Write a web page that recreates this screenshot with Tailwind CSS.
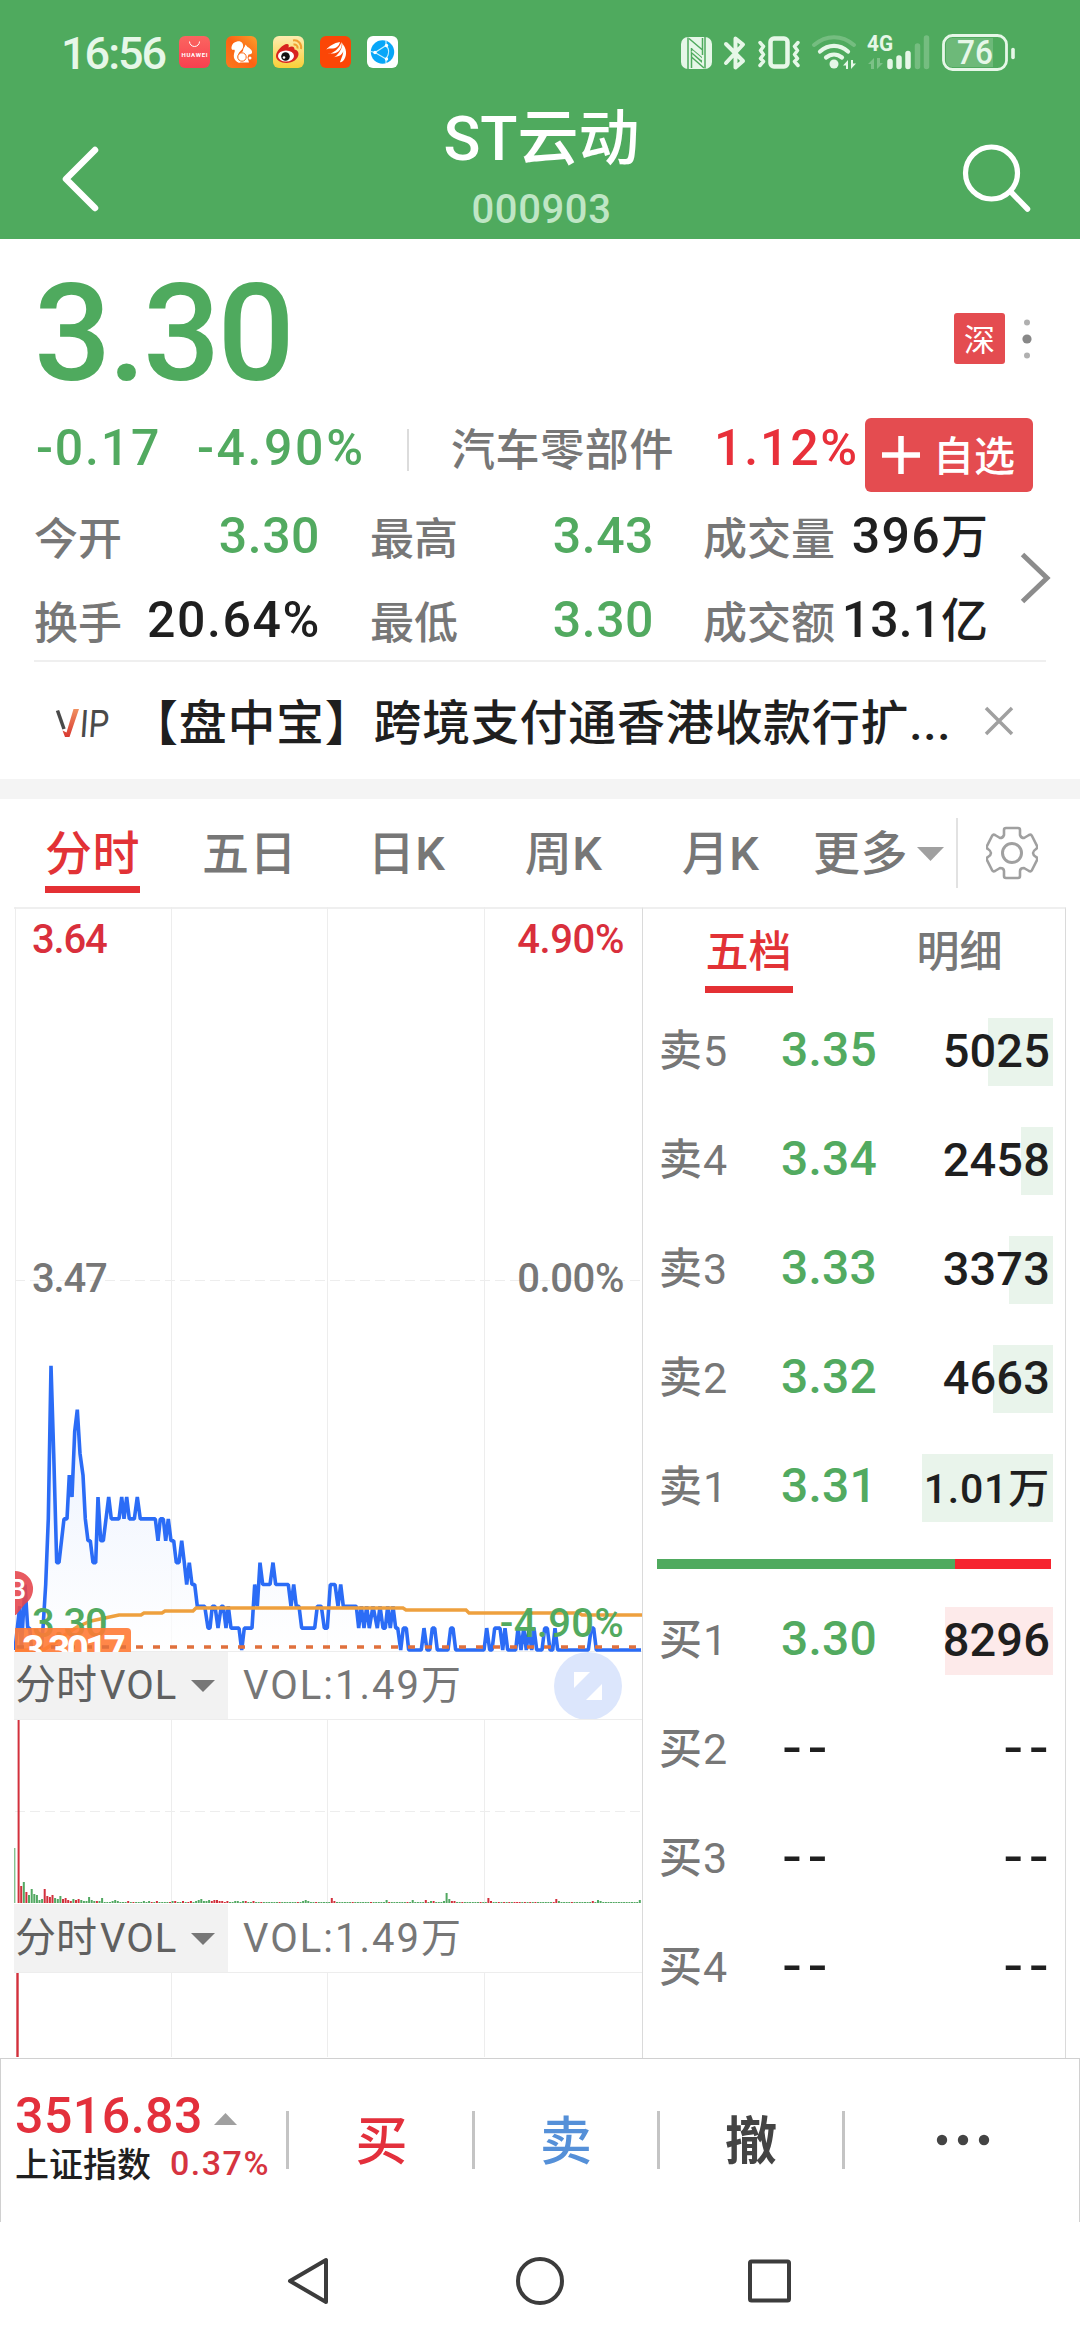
<!DOCTYPE html>
<html lang="zh-CN">
<head>
    <meta charset="UTF-8">
    <meta name="viewport" content="width=device-width, initial-scale=1.0">
    <title>ST云动 000903</title>
    <script src="https://cdn.jsdelivr.net/npm/@tailwindcss/browser@4"></script>
</head>
<body class="w-[1080px] h-[2340px] overflow-hidden bg-white text-[#1f1f1f] font-medium leading-none whitespace-nowrap font-['Roboto','Noto_Sans_CJK_SC',sans-serif]">
    <header class="h-[239px] bg-[#4faa5e] text-white">
        <!-- status bar -->
        <div class="h-[104px] flex items-center justify-between pl-[61px] pr-[65px] text-[#e6f7e8]">
            <div class="flex items-center">
                <span class="w-[118px] text-[45px] tracking-[-2px] pt-[2px]">16:56</span>
                <svg class="w-[220px] h-8" viewBox="0 0 220 32">
                    <defs>
                        <linearGradient id="hw" x1="0" y1="0" x2="0" y2="1"><stop offset="0" stop-color="#fb6560"/><stop offset="1" stop-color="#f8404f"/></linearGradient>
                        <linearGradient id="uc" x1="1" y1="0" x2="0" y2="1"><stop offset="0" stop-color="#fba02c"/><stop offset=".5" stop-color="#fd6212"/><stop offset="1" stop-color="#fb7a20"/></linearGradient>
                        <linearGradient id="wb" x1="0" y1="0" x2="0" y2="1"><stop offset="0" stop-color="#fdecb0"/><stop offset="1" stop-color="#f8cf38"/></linearGradient>
                    </defs>
                    <rect width="31" height="32" rx="6" fill="url(#hw)"/>
                    <path d="M10.500 5.500a5 5 0 0 0 10 0" fill="none" stroke="#fff" stroke-width="1"/>
                    <text x="15.500" y="21" font-size="6" font-weight="700" fill="#fff" text-anchor="middle" textLength="26">HUAWEI</text>
                    <g transform="translate(47)">
                        <rect width="31" height="32" rx="6" fill="url(#uc)"/>
                        <path d="M11 5.500c4-1 7 2 6 6-1 3-4 4-5 7-1 3 0 6 2 8.500-4-1-7-4-6-9 .4-2 1.500-3.500 0-4.500-1 1-3 0-2.500-2.500C6 8 8 6 11 5.500z" fill="#fff"/>
                        <path d="M17 15c0-3 2-4 2.500-6.500l2 2.500c2 1 4 2.500 4.500 4.500.5 2-1 3-3.500 3l-1 3 1.500 5H12.500c-1-4 0-7 2-9z" fill="#fff"/>
                        <circle cx="16" cy="21" r="4.200" fill="#fff" stroke="#fd6a16"/>
                        <circle cx="24" cy="22" r="1.500" fill="#fff"/>
                    </g>
                    <g transform="translate(94)">
                        <rect width="31" height="32" rx="6" fill="url(#wb)"/>
                        <path d="M3 20c0-5 7-12 11-12 2 0 2 1.500 1.500 3.500 3-1.500 6-1.500 6 2 2.500.5 4 2 4 4.500 0 5-6 9-12 9S3 24 3 20z" fill="#d8231f"/>
                        <ellipse cx="13" cy="20" rx="8" ry="5.600" fill="#fff"/>
                        <circle cx="12.500" cy="20.500" r="4.300" fill="#111"/><circle cx="11" cy="21.500" r="1.300" fill="#fff"/>
                        <path d="M20 4.500c5-1 9 3.500 8 8.500M20.500 8.500c2.500-.5 4.500 1.500 4 4" fill="none" stroke="#f0a030" stroke-width="2"/>
                    </g>
                    <g transform="translate(141)">
                        <rect width="31" height="32" rx="6" fill="#fb4606"/>
                        <path d="M6 14c3-4 8-7 14-8-1 5-5 7-10 6.500C8 12.500 7 13 6 14zM8 18c6-1 11-5 13.500-12C23 12 18 18 12 17.500c-2 0-3 0-4 .5zM13 22c5-3 9-8 9.500-15C26 14 22 20 17 20.500c-2 .3-3 .6-4 1.500zM20 26c2-5 4-9 3.500-17 4 6 3 12-.5 16-1 1-2 1.500-3 1z" fill="#fff"/>
                    </g>
                    <g transform="translate(188)">
                        <rect width="31" height="32" rx="6" fill="#fff"/>
                        <circle cx="15.500" cy="16" r="11.700" fill="#08a6f8"/>
                        <path d="M8 16.500 19 9.500M8 16.500l11 6.500M19 9.500c4 4 3 9 0 13.500M19 9.500V4M19 23v4M8 16.500l-4-1" fill="none" stroke="#c8f0ff" stroke-width="1.200"/>
                        <circle cx="8" cy="16.500" r="1.700" fill="#fff"/><circle cx="19.500" cy="9.500" r="1.700" fill="#fff"/><circle cx="19.500" cy="23" r="1.700" fill="#fff"/>
                    </g>
                </svg>
            </div>
            <svg class="w-[335px] h-10" viewBox="0 0 335 40" fill="none" stroke="#e6f7e8">
                <!-- nfc -->
                <rect x="1" y="5" width="31" height="32" rx="7" fill="#e6f7e8" stroke="none"/>
                <path d="M8 5.500V37M25 5v31.500" stroke="#4faa5e" stroke-width="1.500"/>
                <path d="M9 6.500 22.500 18M11.500 16v20M22.500 6v17M11.500 25 24 36" stroke="#4faa5e" stroke-width="1.500"/>
                <path d="M12 16.500l10 8.500v6L12 22z" fill="#4faa5e" stroke="none"/>
                <path d="M12 19l10 8.500" stroke-width="2"/>
                <!-- bluetooth -->
                <path d="M46 12l17 17-7.500 6.500v-29L63 12.500 46 31" stroke-width="4" stroke-linecap="round" stroke-linejoin="round"/>
                <!-- vibrate -->
                <rect x="90.500" y="6.500" width="17" height="28" rx="3.500" stroke-width="4.500"/>
                <path d="M80 10.500l3.500 4-3 4 3 4-3 4 3 3-3.500 4M118 10.500l-3.500 4 3 4-3 4 3 4-3 3 3.500 4" stroke-width="3.500" stroke-linecap="round" stroke-linejoin="round"/>
                <!-- wifi -->
                <path d="M134 13c12-10.500 28-10.500 40 0" stroke-width="4" stroke-linecap="round" opacity=".25"/>
                <path d="M140 19.500c8.500-7.500 19.500-7.500 28 0M146 25.500c5-4 11-4 16 0" stroke-width="4.200" stroke-linecap="round"/>
                <circle cx="154" cy="32" r="4.500" fill="#e6f7e8" stroke="none"/>
                <path d="M168 37v-9l-5 5.500h3V37zM171 28v9l5-5.500h-3V28z" fill="#e6f7e8" stroke="none"/>
                <!-- signal -->
                <text x="187" y="19" font-size="22" font-weight="700" fill="#e6f7e8" stroke="none" textLength="26" lengthAdjust="spacingAndGlyphs">4G</text>
                <path d="M194 37V26l-6 6h3v5zM197 26v11l6-6h-3v-5z" fill="#e6f7e8" stroke="none" opacity=".3"/>
                <path d="M210 29.500v5M219 26v8.500M228 21.500v13" stroke-width="5.500" stroke-linecap="round"/>
                <path d="M237.500 14v20.500M246.500 6v28.500" stroke-width="5.500" stroke-linecap="round" opacity=".25"/>
                <!-- battery -->
                <rect x="263.500" y="3.500" width="63" height="34" rx="9" stroke-width="2.800"/>
                <path d="M272 6h41v29h-41a6 6 0 0 1-6-6V12a6 6 0 0 1 6-6z" fill="#e6f7e8" stroke="none" opacity=".2"/>
                <text x="277" y="32" font-size="33" font-weight="500" fill="#e6f7e8" stroke="none" textLength="36" lengthAdjust="spacingAndGlyphs">76</text>
                <path d="M333 17.500v8" stroke-width="3.600" stroke-linecap="round"/>
            </svg>
        </div>
        <!-- title -->
        <div class="h-[135px] flex items-center justify-between pl-[58px] pr-[46px]">
            <svg class="w-12 h-[70px] mt-[15px]" viewBox="0 0 48 70"><path d="M37 6 8 35l29 29" fill="none" stroke="#fff" stroke-width="6.500" stroke-linecap="round" stroke-linejoin="round"/></svg>
            <div class="flex flex-col items-center pl-[17px]">
                <h1 class="h-[72px] text-[61px] leading-[70px] font-medium">ST云动</h1>
                <p class="h-[63px] text-[40px] leading-[68px] tracking-[0.6px] text-[#bfe6c5]">000903</p>
            </div>
            <svg class="w-[74px] h-[70px] mt-[15px]" viewBox="0 0 74 70"><g fill="none" stroke="#fff" stroke-linecap="round"><circle cx="31.500" cy="29" r="26" stroke-width="5.200"/><path d="M51 48l16.500 17" stroke-width="5.500"/></g></svg>
        </div>
    </header>

    <!-- quote -->
    <section class="h-[423px] mx-[34px] border-b-2 border-[#efefef]">
        <div class="h-[180px] flex items-center justify-between pr-[15px]">
            <span class="text-[136px] tracking-[-3px] text-[#4faa5e] pt-[10px]">3.30</span>
            <div class="flex items-center gap-[17px] pt-[19px] -mr-[1px]">
                <span class="w-[51px] h-[51px] rounded-[3px] bg-[#e44c50] text-white text-[31px] font-normal flex items-center justify-center pt-1">深</span>
                <svg class="w-[10px] h-10" viewBox="0 0 10 40"><circle cx="5" cy="3.500" r="3" fill="#b0b0b0"/><circle cx="5" cy="20" r="4.600" fill="#888"/><circle cx="5" cy="36.500" r="3" fill="#b0b0b0"/></svg>
            </div>
        </div>
        <div class="h-[75px] flex items-center text-[50px] text-[#52aa60]">
            <div class="flex items-center pb-[17px]">
                <span class="w-[162px] pl-[2px] tracking-[1.8px]">-0.17</span>
                <span class="w-[211px] pl-[1px] tracking-[2.6px]">-4.90%</span>
                <span class="w-[2px] h-[42px] mt-1 bg-[#dcdcdc]"></span>
                <span class="w-[262px] pl-[42px] pt-[6px] text-[44px] tracking-[0.6px] text-[#777]">汽车零部件</span>
                <span class="w-[194px] pl-[43px] tracking-[1.8px] text-[#e8303a]">1.12%</span>
            </div>
            <button class="w-[168px] h-[74px] rounded-md bg-[#e44c50] text-white flex items-center pl-[17px] gap-[13px] -mt-[3px]">
                <svg class="w-[38px] h-[38px]" viewBox="0 0 38 38"><path d="M0 19h38M19 0v38" stroke="#fff" stroke-width="5.500"/></svg>
                <span class="text-[41px] pt-[5px]">自选</span>
            </button>
        </div>
        <div class="flex items-center">
            <div class="shrink-0 grid grid-cols-[283px_334px_334px] text-[44px] text-[#777]">
                <div class="h-[84px] flex items-center justify-between"><span class="pt-[7px]">今开</span><span class="text-[50px] tracking-[0.5px] -mr-[3px] text-[#52aa60]">3.30</span></div>
                <div class="h-[84px] flex items-center justify-between pl-[53px]"><span class="pt-[7px]">最高</span><span class="text-[50px] tracking-[0.5px] -mr-[3px] text-[#52aa60]">3.43</span></div>
                <div class="h-[84px] flex items-center justify-between pl-[52px]"><span class="pt-[7px]">成交量</span><span class="text-[#1f1f1f] flex items-center -mr-[3px]"><b class="font-medium text-[50px] tracking-[1.3px]">396</b><b class="font-medium text-[47px]">万</b></span></div>
                <div class="h-[84px] flex items-center justify-between"><span class="pt-[7px]">换手</span><span class="text-[50px] tracking-[1.6px] -mr-[4px] text-[#1f1f1f]">20.64%</span></div>
                <div class="h-[84px] flex items-center justify-between pl-[53px]"><span class="pt-[7px]">最低</span><span class="text-[50px] tracking-[0.5px] -mr-[3px] text-[#52aa60]">3.30</span></div>
                <div class="h-[84px] flex items-center justify-between pl-[52px]"><span class="pt-[7px]">成交额</span><span class="text-[#1f1f1f] flex items-center -mr-[3px]"><b class="font-medium text-[50px]">13.1</b><b class="font-medium text-[47px]">亿</b></span></div>
            </div>
            <svg class="shrink-0 w-8 h-[54px] ml-[34px] -mt-[1px]" viewBox="0 0 32 54"><path d="M3.500 3.500 28 27 3.500 50.500" fill="none" stroke="#8c8c8c" stroke-width="5"/></svg>
        </div>
    </section>

    <!-- news -->
    <section class="h-[117px] flex items-center pl-[55px]">
        <svg class="w-[54px] h-[30px] mt-1" viewBox="0 0 54 30">
            <defs><linearGradient id="vip" x1="0" y1="0" x2="0" y2="1"><stop offset="0" stop-color="#f09060"/><stop offset="1" stop-color="#d83830"/></linearGradient></defs>
            <path d="M2.500 2.500 9 21" stroke="#4a4a4a" stroke-width="3.500" fill="none"/>
            <path d="M18.500 1H24l-9.500 28H10L7.500 22.500l4 2z" fill="url(#vip)"/>
            <text x="26" y="29" font-size="38" font-weight="400" fill="#4a4a4a" textLength="29" lengthAdjust="spacingAndGlyphs" transform="skewX(-4)">IP</text>
        </svg>
        <p class="w-[850px] pl-[21px] pt-[7px] text-[48px] tracking-[0.7px]">【盘中宝】跨境支付通香港收款行扩...</p>
        <svg class="w-[30px] h-[30px] ml-[25px]" viewBox="0 0 30 30"><path d="M2 2l26 26M28 2 2 28" stroke="#a0a0a0" stroke-width="3.500"/></svg>
    </section>
    <div class="h-5 bg-[#f4f4f4]"></div>

    <!-- periods -->
    <nav class="h-[108px] flex items-center pl-[14px] text-[47px] tracking-[0.5px] text-[#777]">
        <div class="w-[157px] h-full flex flex-col items-center pt-[31px] text-[#e23236]"><span>分时</span><i class="block w-[95px] h-[7px] mt-[9px] bg-[#e43034]"></i></div>
        <span class="w-[157px] text-center">五日</span>
        <span class="w-[157px] text-center">日K</span>
        <span class="w-[157px] text-center">周K</span>
        <span class="w-[157px] text-center">月K</span>
        <span class="w-[118px] pl-[14px]">更多</span>
        <svg class="w-[27px] h-[14px] mt-[1px]" viewBox="0 0 27 14"><path d="M0 0h27L13.500 14z" fill="#a0a0a0"/></svg>
        <i class="w-[2px] h-[70px] bg-[#e2e2e2] ml-[12px]"></i>
        <svg class="w-[52px] h-[54px] ml-[28px]" viewBox="0 0 52 54" fill="none" stroke="#a0a0a0" stroke-width="2.600" stroke-linejoin="round"><path d="M20 2h12q2 0 2 2v5q1 3 4 3l5-3q2-1 3 1l5 10q1 2-1 3-6 4 0 8 2 1 1 3l-5 10q-1 2-3 1l-5-3q-4 0-4 3v5q0 2-2 2H20q-2 0-2-2v-5q0-3-4-3l-5 3q-2 1-3-1L1 34q-1-2 1-3 6-4 0-8-2-1-1-3L6 10q1-2 3-1l5 3q3 0 4-3V4q0-2 2-2z"/><circle cx="26" cy="27" r="9.500" stroke-width="3"/></svg>
    </nav>

    <main class="h-[1151px] flex">
        <!-- charts -->
        <div class="w-[628px] ml-[14px]">
            <svg id="price" class="w-[628px] h-[745px]" viewBox="0 0 628 745">
                <defs><linearGradient id="area" gradientUnits="userSpaceOnUse" x1="0" y1="460" x2="0" y2="744"><stop offset="0" stop-color="#dfe9fd"/><stop offset="1" stop-color="#fff"/></linearGradient></defs>
                <path d="M0 1h628" stroke="#efefef" stroke-width="2"/>
                <path d="M1.500 0v745M157.500 0v745M313.500 0v745M470.500 0v745M0 744.500h628" stroke="#ededed"/>
                <path d="M1 373.500h626" stroke="#ededed" stroke-dasharray="10 5"/>
                <path id="fill" fill="url(#area)" opacity=".7"/>
                <path id="line" fill="none" stroke="#2b6cf6" stroke-width="3.600" stroke-linejoin="bevel"/>
                <path d="M1 743h20l10-1 8-5 10-8 14-9 14-6 14-3 14-3h22l3-2h18l3-2h28l3-3h207l3 2h60l3 3h110l3 2h60" fill="none" stroke="#eea03e" stroke-width="3.400"/>
                <g font-size="40" font-weight="500" letter-spacing="-1.2">
                    <text x="18" y="46" fill="#d92f3c">3.64</text>
                    <text x="610" y="46" fill="#d92f3c" text-anchor="end" letter-spacing="-0.400">4.90%</text>
                    <text x="18" y="385" fill="#777">3.47</text>
                    <text x="610" y="385" fill="#777" text-anchor="end" letter-spacing="-0.400">0.00%</text>
                    <text x="18" y="730" fill="#52aa60">3.30</text>
                    <text x="610" y="730" fill="#52aa60" text-anchor="end" letter-spacing="0.300">-4.90%</text>
                </g>
                <path d="M1 664a18 18 0 0 1 10 33L2 708H1z" fill="#e5484f" opacity=".9"/>
                <svg x="1" y="664" width="30" height="40"><text x="-6" y="28" font-size="27" font-weight="500" fill="#fff">B</text></svg>
                <path d="M1 721h112q4 0 4 4v20H1z" fill="#ff7a35" opacity=".9"/>
                <path d="M3 740h625" stroke="#e0703c" stroke-width="3.500" stroke-dasharray="7 10"/>
                <text x="8" y="756" font-size="39" font-weight="700" fill="#fff" textLength="104">3.3017</text>
            </svg>
            <div class="h-[67px] flex items-center text-[40px] text-[#777] font-normal">
                <div class="w-[214px] h-full bg-[#f2f2f2] flex items-center text-[#606060] pl-[1px]">
                    <span class="w-[85px] text-[41px]">分时</span><span class="w-[91px] tracking-[1px]">VOL</span>
                    <svg class="w-6 h-3" viewBox="0 0 24 12"><path d="M0 0h24L12 12z" fill="#777"/></svg>
                </div>
                <span class="w-[326px] pl-[15px] tracking-[2px]">VOL:1.49万</span>
                <svg class="w-[68px] h-[68px]" viewBox="0 0 68 68"><circle cx="34" cy="34" r="34" fill="#dce6fc"/><path d="M20 20h16L20 36zM48 32v16H32z" fill="#fff"/></svg>
            </div>
            <svg id="vol1" class="w-[628px] h-[185px]" viewBox="0 0 628 185">
                <path d="M0 .5h628M157.500 0v185M313.500 0v185M470.500 0v185" stroke="#ededed"/>
                <path d="M1 92.500h627" stroke="#ededed" stroke-dasharray="10 5"/>
            </svg>
            <div class="h-[68px] flex items-center text-[40px] text-[#777] font-normal">
                <div class="w-[214px] h-full bg-[#f2f2f2] flex items-center text-[#606060] pl-[1px] pt-[1px]">
                    <span class="w-[85px] text-[41px]">分时</span><span class="w-[91px] tracking-[1px]">VOL</span>
                    <svg class="w-6 h-3" viewBox="0 0 24 12"><path d="M0 0h24L12 12z" fill="#777"/></svg>
                </div>
                <span class="pl-[15px] pt-[1px] tracking-[2px]">VOL:1.49万</span>
            </div>
            <svg class="w-[628px] h-[85px]" viewBox="0 0 628 85">
                <path d="M0 .5h628M157.500 0v85M313.500 0v85M470.500 0v85" stroke="#ededed"/>
                <path d="M3.500 1v84" stroke="#d2303c" stroke-width="2.400"/>
            </svg>
        </div>

        <!-- order book -->
        <div class="w-[424px] border-x border-t-2 border-x-[#dadada] border-t-[#efefef]">
            <div class="h-[88px] flex text-[43px] text-[#777]">
                <div class="w-[212px] flex flex-col items-center pt-[22px] text-[#e23236]"><span>五档</span><i class="block w-[88px] h-[7px] mt-[12px] bg-[#e43034]"></i></div>
                <span class="w-[212px] text-center pt-[22px]">明细</span>
            </div>
            <div id="sells"></div>
            <div class="h-11 flex items-center pl-[14px]"><i class="w-[298px] h-[10px] bg-[#4faa5e]"></i><i class="w-[96px] h-[10px] bg-[#f6242f]"></i></div>
            <div id="buys"></div>
        </div>
    </main>

    <!-- trade bar -->
    <footer class="h-[164px] border border-b-0 border-[#d0d0d0] flex pt-[52px] text-[52px]">
        <div class="w-[285px] pl-[14px] -mt-[20px]">
            <div class="flex items-center text-[50px] tracking-[0.5px] text-[#e3303c]"><span class="w-[199px]">3516.83</span><svg class="w-[23px] h-3 mt-[6px]" viewBox="0 0 23 12"><path d="M0 12h23L11.500 0z" fill="#a0a0a0"/></svg></div>
            <div class="flex items-center mt-[3px]"><span class="w-[155px] text-[34px] pt-1">上证指数</span><span class="text-[34px] tracking-[1.5px] text-[#d63440]">0.37%</span></div>
        </div>
        <i class="w-[3px] h-[58px] bg-[#c4c4c4]"></i>
        <span class="w-[183px] text-center pt-[6px] pl-[2px] text-[#e3303c]">买</span>
        <i class="w-[3px] h-[58px] bg-[#c4c4c4]"></i>
        <span class="w-[182px] text-center pt-[6px] text-[#5590d8]">卖</span>
        <i class="w-[3px] h-[58px] bg-[#c4c4c4]"></i>
        <span class="w-[182px] text-center pt-[6px] text-[#444] font-bold">撤</span>
        <i class="w-[3px] h-[58px] bg-[#c4c4c4]"></i>
        <svg class="w-[54px] h-[12px] ml-[91px] mt-[23px]" viewBox="0 0 54 12"><g fill="#444"><circle cx="6" cy="6" r="5.200"/><circle cx="27" cy="6" r="5.200"/><circle cx="48" cy="6" r="5.200"/></g></svg>
    </footer>
    <div class="h-[119px] flex justify-center">
        <svg class="w-[520px] h-[60px] mt-[29px]" viewBox="0 0 520 60" fill="none" stroke="#3c3c3c" stroke-width="4" stroke-linejoin="round"><path d="M46 9v42L10 30z"/><circle cx="260" cy="30" r="22"/><rect x="470" y="10.500" width="39" height="39" rx="1.500"/></svg>
    </div>

    <script>
        // [x * 3, ticks above the low]
        const points = [
            [0,0],[7,1],[14,2],[19,0],[30,3],[38,1],[44,1],[50,0],[78,0],[84,1],[92,3],[100,6],[108,13],[116,9],[125,4],[132,4],[147,6],[156,6],[163,8],[171,7],[179,10],[187,11],[195,9],[204,8],[211,6],[219,5],[226,5],[234,4],[242,4],[249,7],[257,5],[265,5],[273,6],[281,7],[289,6],[312,6],[320,7],[327,6],[335,7],[343,6],[358,6],[367,7],[376,6],[421,6],[429,5],[436,6],[445,6],[452,5],[460,6],[468,5],[476,5],[484,4],[492,4],[500,5],[508,4],[515,3],[523,4],[531,3],[539,3],[547,2],[569,2],[579,1],[585,1],[592,2],[600,2],[609,1],[619,2],[625,2],[633,1],[640,2],[648,1],[672,1],[680,0],[688,1],[711,1],[719,3],[727,2],[735,4],[743,3],[765,3],[774,4],[782,3],[820,3],[828,2],[836,3],[844,2],[852,2],[860,1],[899,1],[907,2],
            [919,2],[928,1],[937,1],[946,3],[960,3],[969,2],[977,3],[985,2],[1024,2],[1031,1],[1039,2],[1047,1],[1055,2],[1063,1],[1074,2],[1087,1],[1095,2],[1104,1],[1111,1],[1118,2],[1126,1],[1134,2],[1142,1],[1148,1],[1157,0],[1165,1],[1174,1],[1181,0],[1219,0],[1227,1],[1236,0],[1244,0],[1252,1],[1259,1],[1267,0],[1299,0],[1307,1],[1314,1],[1322,0],[1407,0],[1415,1],[1424,0],[1431,0],[1439,1],[1455,1],[1463,0],[1470,1],[1478,0],[1502,0],[1509,1],[1518,0],[1526,1],[1534,0],[1542,1],[1550,0],[1557,1],[1565,0],[1581,0],[1589,1],[1597,1],[1605,0],[1613,0],[1620,1],[1628,0],[1720,0],[1729,1],[1736,1],[1744,0],[1878,0]
        ];
        const d = points.map(([x, n]) => `${(1 + x / 3).toFixed(1)} ${(743 - n * 21.85).toFixed(1)}`).join('L');
        document.getElementById('line').setAttribute('d', 'M' + d);
        document.getElementById('fill').setAttribute('d', 'M1 744L' + d + 'L627 744z');

        // volume per minute: height and colour, quiet minutes are 1px
        const volumes = { 0: '55g', 1: '183r', 2: '17r', 3: '21g', 4: '11r', 5: '8g', 6: '14g', 7: '9g', 8: '8g', 9: '3g', 10: '4g', 11: '14r', 12: '7r', 13: '6r', 14: '8r', 15: '5g', 16: '4g', 17: '7g', 18: '4r', 19: '5r', 20: '3r', 21: '2r', 22: '4g', 23: '3r', 24: '4r', 25: '3g', 26: '2g', 27: '2g', 28: '6g', 29: '3g', 30: '2g', 31: '2r', 32: '2g', 33: '5g', 37: '2g', 38: '3g', 39: '2g', 43: '2r', 49: '2g', 51: '2g', 54: '2r', 60: '2g', 61: '2r', 64: '2r', 67: '2r', 69: '2g', 70: '3g', 71: '4g', 72: '2g', 73: '2g', 74: '3g', 75: '2r', 76: '3r', 77: '3r', 78: '2r', 79: '2r', 81: '2r', 84: '2g', 85: '2g', 87: '2g', 88: '2r', 91: '2r', 110: '2g', 111: '3g', 112: '2g', 121: '5r', 122: '2r', 142: '3g', 152: '3g', 157: '3r', 159: '2g', 160: '2r', 164: '2g', 165: '10g', 166: '4g', 167: '2r', 168: '2r', 181: '5r', 182: '2r', 207: '4r', 208: '2g', 221: '2r', 223: '3g', 224: '2g', 239: '3g' };
        let bars = '';
        for (let i = 0; i < 240; i++) {
            const v = volumes[i] || (i % 7 === 3 && i < 215 || i > 183 && i < 200 && i % 2 ? '1r' : '1g');
            const h = parseInt(v);
            bars += `<rect x="${(1.3 + i * 2.61 - (i ? 0.3 : 1)).toFixed(1)}" y="${184 - h}" width="${i ? 2 : 1}" height="${h}" fill="${v.endsWith('r') ? '#d2303c' : '#52a862'}"/>`;
        }
        document.getElementById('vol1').innerHTML += bars;

        // label, price, volume, bar width
        const row = (tint) => ([name, price, vol, w]) => {
            let priceClass = 'text-[#52aa60] tracking-[0.2px]';
            let volClass = 'text-[47px] tracking-[0.1px] -mt-[3px]';
            if (!w) {
                priceClass = 'tracking-[5px] origin-left scale-x-[1.2] pl-[1px]';
                volClass = 'text-[48px] tracking-[5px] -mr-[5px] origin-right scale-x-[1.2] -mt-[3px]';
            } else if (vol.includes('万')) {
                volClass = 'text-[41px] tracking-[0.8px] pt-[3px]';
            }
            return `
            <div class="h-[109px] flex items-center pl-[16px] pr-[12px]">
                <span class="w-[122px] text-[43px] text-[#777]">${name[0]}<b class="font-normal pl-[1px]">${name[1]}</b></span>
                <span class="text-[48px] -mt-[3px] ${priceClass}">${price}</span>
                <div class="relative ml-auto h-[68px] min-w-[40px] flex items-center justify-end pr-[3px]">
                    <i class="absolute right-0 top-0 h-full ${tint}" style="width:${w}px"></i>
                    <span class="relative ${volClass}">${vol}</span>
                </div>
            </div>`;
        };
        document.getElementById('sells').innerHTML = [
            ['卖5', '3.35', '5025', 65], ['卖4', '3.34', '2458', 32], ['卖3', '3.33', '3373', 44], ['卖2', '3.32', '4663', 60], ['卖1', '3.31', '1.01万', 131]
        ].map(row('bg-[#e9f4eb]')).join('');
        document.getElementById('buys').innerHTML = [
            ['买1', '3.30', '8296', 108], ['买2', '--', '--', 0], ['买3', '--', '--', 0], ['买4', '--', '--', 0]
        ].map(row('bg-[#fdeaea]')).join('');
    </script>
</body>
</html>
